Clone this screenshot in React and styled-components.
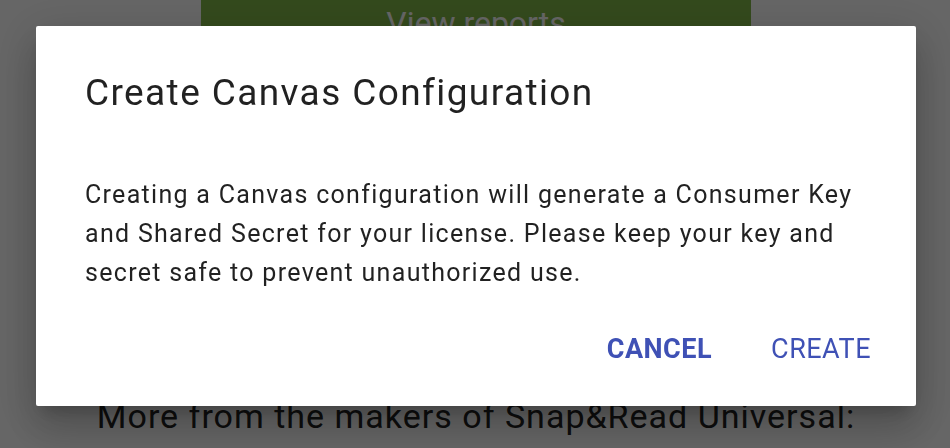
import React from "react";
import styled, { createGlobalStyle } from "styled-components";

const Global = createGlobalStyle`
  html, body { margin: 0; padding: 0; background: #ffffff; overflow: hidden; }
  body { font-family: Roboto, "Noto Sans", "Liberation Sans", sans-serif; }
  * { box-sizing: border-box; }
`;

const Page = styled.div`
  width: 950px;
  height: 448px;
  display: flex;
  flex-direction: column;
  align-items: center;
  padding-left: 2px;
  background: #ffffff;
`;

const ReportsButton = styled.div`
  width: 550px;
  height: 60px;
  padding-top: 7px;
  background: #82b948;
  color: #ffffff;
  font-size: 32px;
  line-height: 32px;
  text-align: center;
`;

const MoreHeading = styled.h2`
  margin: 336px 0 0;
  font-size: 34px;
  line-height: 40px;
  font-weight: 400;
  letter-spacing: 1px;
  color: #222222;
  white-space: nowrap;
`;

const Backdrop = styled.div`
  position: fixed;
  inset: 0;
  background: rgba(0, 0, 0, 0.6);
  display: flex;
  justify-content: center;
  align-items: flex-start;
  padding: 26px 0 0 2px;
`;

const Dialog = styled.div`
  width: 880px;
  background: #ffffff;
  border-radius: 2px;
  box-shadow: 0 11px 15px -7px rgba(0, 0, 0, 0.2),
    0 24px 38px 3px rgba(0, 0, 0, 0.14), 0 9px 46px 8px rgba(0, 0, 0, 0.12);
  padding: 45px 49px 39px 49px;
  display: flex;
  flex-direction: column;
`;

const Title = styled.h1`
  margin: 0;
  font-size: 37px;
  line-height: 44px;
  font-weight: 400;
  letter-spacing: 1.4px;
  color: rgba(0, 0, 0, 0.87);
`;

const Body = styled.p`
  margin: 60px 0 0;
  font-size: 25px;
  line-height: 39px;
  letter-spacing: 1.3px;
  color: rgba(0, 0, 0, 0.87);
`;

const Actions = styled.div`
  margin: 39px -18px 0 0;
  display: flex;
  justify-content: flex-end;
  gap: 31px;
`;

const ActionButton = styled.button`
  border: 0;
  background: transparent;
  padding: 0 14px;
  font-family: inherit;
  font-size: 27px;
  line-height: 36px;
  letter-spacing: 0.5px;
  text-transform: uppercase;
  color: #3f51b5;
  font-weight: ${(p) => (p.$strong ? 700 : 400)};
  cursor: pointer;
`;

export default function App() {
  return (
    <>
      <Global />
      <Page>
        <ReportsButton>View reports</ReportsButton>
        <MoreHeading>More from the makers of Snap&amp;Read Universal:</MoreHeading>
      </Page>
      <Backdrop>
        <Dialog role="dialog">
          <Title>Create Canvas Configuration</Title>
          <Body>
            Creating a Canvas configuration will generate a Consumer Key and
            Shared Secret for your license. Please keep your key and secret
            safe to prevent unauthorized use.
          </Body>
          <Actions>
            <ActionButton $strong>Cancel</ActionButton>
            <ActionButton>Create</ActionButton>
          </Actions>
        </Dialog>
      </Backdrop>
    </>
  );
}
